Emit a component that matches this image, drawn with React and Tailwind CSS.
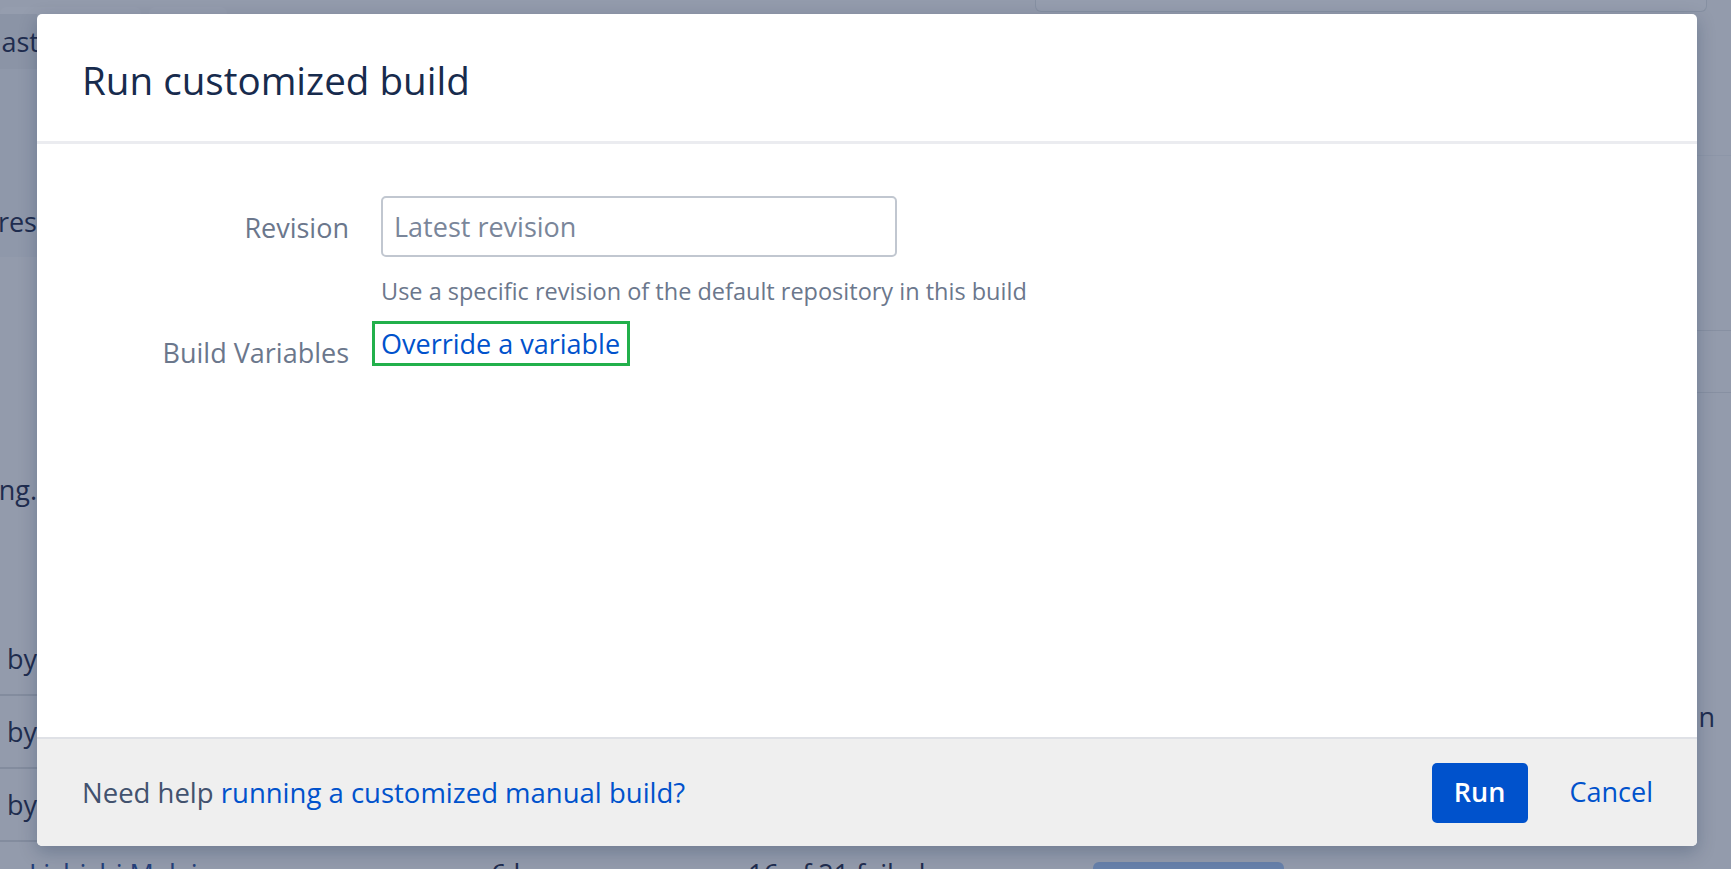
const FONT = "font-['Open_Sans','Noto_Sans',sans-serif]"

function PageBehind() {
  // the page under the dimmed overlay, only its edges show
  return (
    <div className="absolute inset-0 flex flex-col overflow-hidden text-[27px] leading-[36px] text-[#1f2d4f]">
      {/* top tabs */}
      <div className="flex h-[14px] shrink-0">
        <div className="w-[141px] rounded-t-[6px] mt-[7px] bg-[#959dae]" />
        <div className="w-[78px] ml-[8px] rounded-t-[6px] mt-[7px] bg-[#959dae]" />
        <div className="ml-[808px] w-[672px] h-[12px] rounded-b-[6px] border border-t-0 border-[#8690a2] bg-[#959dae]" />
      </div>
      <div className="flex flex-col w-[37px] whitespace-nowrap">
        <div className="h-[55px] bg-[#8b94a6] flex items-center justify-end overflow-hidden">
          <span className="-mr-[2px]">nast</span>
        </div>
        <div className="h-[188px] bg-[#8f98aa] flex items-end justify-end pb-[17px] overflow-hidden">
          <span>res</span>
        </div>
        <div className="h-[367px] flex items-start justify-end pt-[215px] overflow-hidden">
          <span>ng.</span>
        </div>
        <div className="h-[72px] flex items-center justify-end border-b-2 border-[#838c9e] overflow-hidden">
          <span>by</span>
        </div>
        <div className="h-[73px] flex items-center justify-end border-b-2 border-[#838c9e] overflow-hidden">
          <span>by</span>
        </div>
        <div className="h-[73px] flex items-center justify-end border-b-2 border-[#838c9e] overflow-hidden">
          <span>by</span>
        </div>
        <div className="h-[20px]" />
      </div>
      {/* right edge rows */}
      <div className="absolute right-0 top-[155px] w-[34px] border-t border-[#8d96a8]" />
      <div className="absolute right-0 top-[330px] w-[34px] border-t border-[#8790a2]" />
      <div className="absolute right-0 top-[392px] w-[34px] border-t border-[#8790a2]" />
      <div className="absolute right-[16px] top-[703px] leading-none">n</div>
      {/* bottom row peeking under the dialog */}
      <div className="absolute left-0 top-[856px] flex items-start whitespace-nowrap">
        <div className="w-[491px] overflow-hidden">
          <span className="-ml-[8px] text-[#24407a]">by Lichichi Malai</span>
        </div>
        <div className="w-[257px]">6 h</div>
        <div className="w-[345px]">16 of 21 failed</div>
        <div className="w-[191px] h-[20px] mt-[6px] rounded-[6px] bg-[#6781aa]" />
      </div>
    </div>
  )
}

export default function App() {
  return (
    <div className={`relative w-[1731px] h-[869px] overflow-hidden bg-[#939bac] ${FONT}`}>
      <PageBehind />

      {/* dialog */}
      <div className="absolute left-[37px] top-[14px] w-[1660px] h-[832px] flex flex-col rounded-[5px] bg-white overflow-hidden shadow-[0_6px_18px_rgba(9,30,66,0.25)]">
        <div className="h-[130px] shrink-0 flex items-center px-[45px] border-b-[3px] border-[#ebecf0]">
          <h2 className="text-[38.6px] leading-none text-[#172b4d] mt-[6px]">Run customized build</h2>
        </div>

        <div className="flex-1 pt-[52px]">
          <div className="grid grid-cols-[312px_1fr] gap-x-[32px]">
            <label className="flex items-center justify-end h-[61px] pt-[4px] text-[27px] text-[#6b778c]">
              Revision
            </label>
            <div>
              <input
                type="text"
                placeholder="Latest revision"
                className="w-[516px] h-[61px] px-[11px] rounded-[5px] border-2 border-[#c1c7d0] bg-white text-[27px] text-[#172b4d] placeholder:text-[#7a869a] outline-none"
              />
              <div className="mt-[19px] text-[23.5px] leading-[30px] text-[#6b778c]">
                Use a specific revision of the default repository in this build
              </div>
            </div>

            <label className="flex justify-end pt-[29px] text-[27px] leading-[36px] text-[#6b778c]">
              Build Variables
            </label>
            <div className="pt-[15px]">
              <a
                href="#"
                className="inline-block -ml-[9px] pl-[6px] pr-[7px] border-[3px] border-[#22b04b] text-[27px] leading-[39px] text-[#0052cc]"
              >
                Override a variable
              </a>
            </div>
          </div>
        </div>

        <div className="h-[109px] shrink-0 flex items-center justify-between pl-[45px] pr-[44px] bg-[#efefef] border-t-2 border-[#dfe1e6]">
          <p className="text-[27.5px] text-[#42526e]">
            Need help <a href="#" className="text-[#0052cc]">running a customized manual build?</a>
          </p>
          <div className="flex items-center gap-[42px]">
            <button className="w-[96px] h-[60px] rounded-[5px] bg-[#0052cc] text-white text-[27px] font-semibold">
              Run
            </button>
            <button className="text-[27px] text-[#0052cc]">Cancel</button>
          </div>
        </div>
      </div>
    </div>
  )
}
